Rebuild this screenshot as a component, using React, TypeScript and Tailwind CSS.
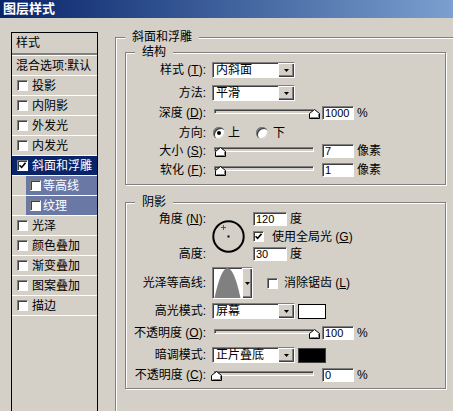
import React from 'react';

// Win2000-style bevels
const sunken =
  'border border-t-[#808080] border-l-[#808080] border-r-white border-b-white shadow-[inset_1px_1px_0_#404040]';
const raised =
  'bg-[#d4d0c8] shadow-[inset_1px_1px_0_#fff,inset_-1px_-1px_0_#404040,inset_-2px_-2px_0_#808080]';
const etched = 'border border-[#808080] shadow-[inset_1px_1px_0_#fff,1px_1px_0_#fff]';

function Arrow() {
  return (
    <svg width="5" height="3" viewBox="0 0 5 3">
      <polygon points="0,0 5,0 2.5,3" fill="#000" />
    </svg>
  );
}

function Check({ on = false }: { on?: boolean }) {
  return (
    <span className={`w-[11px] h-[11px] shrink-0 bg-white flex items-center justify-center ${sunken}`}>
      {on && (
        <svg width="7" height="7" viewBox="0 0 7 7">
          <path d="M0.5 3.2 L2.6 5.4 L6.5 0.8" fill="none" stroke="#000" strokeWidth="1.6" />
        </svg>
      )}
    </span>
  );
}

function Radio({ on = false }: { on?: boolean }) {
  return (
    <span className="w-[12px] h-[12px] shrink-0 rounded-full bg-white shadow-[inset_1px_1px_0_#808080,inset_2px_2px_0_#404040,inset_-1px_-1px_0_#d4d0c8] flex items-center justify-center">
      {on && <span className="w-[4px] h-[4px] rounded-full bg-black" />}
    </span>
  );
}

function Combo({ value }: { value: string }) {
  return (
    <div className={`flex w-[83px] h-[16px] shrink-0 bg-white ${sunken}`}>
      <span className="flex-1 pl-[3px] leading-[14px] whitespace-nowrap">{value}</span>
      <span className={`w-[16px] h-full flex items-center justify-center ${raised}`}>
        <Arrow />
      </span>
    </div>
  );
}

function Field({ v, w = 'w-[32px]' }: { v: string; w?: string }) {
  return (
    <span className={`h-[14px] ${w} shrink-0 bg-white pl-[2px] text-[11px] leading-[12px] flex items-center ${sunken}`}>
      {v}
    </span>
  );
}

function Thumb() {
  return (
    <svg width="11" height="10" viewBox="0 0 11 10">
      <path d="M0.5 9.5 V4.5 L5.5 0.5 L10.5 4.5 V9.5 Z" fill="#fff" stroke="#000" strokeWidth="1" />
      <path d="M9.5 5 V8.5 H1.5" fill="none" stroke="#808080" strokeWidth="1" />
    </svg>
  );
}

function Slider({ left }: { left: string }) {
  return (
    <div className="relative w-[100px] h-[14px] shrink-0 ml-[8px]">
      <div className={`mt-[3px] h-[5px] bg-[#d4d0c8] ${sunken}`} />
      <span className={`absolute top-[3px] ${left} flex`}>
        <Thumb />
      </span>
    </div>
  );
}

function Label({ children }: { children: React.ReactNode }) {
  return <span className="w-[80px] shrink-0 text-right whitespace-pre leading-[14px]">{children}</span>;
}

function Legend({ children }: { children: React.ReactNode }) {
  return (
    <div className="h-0 flex">
      <span className="ml-[9px] -mt-[8px] h-[14px] px-[7px] bg-[#d4d0c8] leading-[14px] whitespace-nowrap">
        {children}
      </span>
    </div>
  );
}

function Key({ k }: { k: string }) {
  return <span className="underline">{k}</span>;
}

function AngleDial() {
  return (
    <svg width="33" height="33" viewBox="0 0 33 33" className="ml-[6px] mt-[8px] shrink-0">
      <circle cx="16.5" cy="16.5" r="15.2" fill="none" stroke="#000" strokeWidth="2" />
      <rect x="15.5" y="15.5" width="2" height="2" fill="#000" />
      <path d="M9 7.5 H14 M11.5 5 V10" stroke="#555" strokeWidth="1" />
    </svg>
  );
}

function Contour() {
  return (
    <div className={`ml-[6px] flex w-[41px] h-[32px] shrink-0 bg-white ${sunken}`}>
      <svg width="29" height="30" viewBox="0 0 29 30" className="shrink-0">
        <path d="M1.5 30 Q14.5 -30 27.5 30 Z" fill="#808080" />
      </svg>
      <span className={`w-[10px] h-full flex items-center justify-center ${raised}`}>
        <Arrow />
      </span>
    </div>
  );
}

const effects = [
  { t: '投影' },
  { t: '内阴影' },
  { t: '外发光' },
  { t: '内发光' },
  { t: '斜面和浮雕', sel: true, on: true },
  { t: '等高线', sub: true },
  { t: '纹理', sub: true },
  { t: '光泽' },
  { t: '颜色叠加' },
  { t: '渐变叠加' },
  { t: '图案叠加' },
  { t: '描边' },
];

function StyleList() {
  return (
    <div className="w-[87px] h-[400px] shrink-0 border border-black">
      <div className="h-[20px] pl-[4px] flex items-center">样式</div>
      <div className="h-[3px] border-t-2 border-t-[#808080] border-b border-b-white" />
      <div className="h-[20px] pl-[4px] flex items-center whitespace-nowrap border-b border-white">
        混合选项:默认
      </div>
      {effects.map((it) => (
        <div key={it.t} className="h-[20px] flex border-b border-white">
          {it.sub ? (
            <div className="ml-[14px] flex-1 bg-[#6a78a6] text-white flex items-center pl-[4px]">
              <Check />
              <span className="ml-[2px] whitespace-nowrap">{it.t}</span>
            </div>
          ) : (
            <div className={`flex-1 flex items-center pl-[5px] ${it.sel ? 'bg-[#0a246a] text-white' : ''}`}>
              <Check on={it.on} />
              <span className="ml-[4px] whitespace-nowrap">{it.t}</span>
            </div>
          )}
        </div>
      ))}
    </div>
  );
}

export default function App() {
  return (
    <div className="w-[453px] h-[411px] overflow-hidden bg-[#d4d0c8] text-black text-[12px] font-['Liberation_Sans','Noto_Sans_CJK_SC',sans-serif]">
      <div className="h-[18px] w-[600px] bg-gradient-to-r from-[#0a246a] to-[#a6caf0] flex items-center pl-[3px] text-white font-bold text-[13px] leading-[16px]">
        图层样式
      </div>

      <div className="flex pt-[14px] pl-[11px]">
        <StyleList />

        {/* 斜面和浮雕 */}
        <div className={`ml-[17px] mt-[5px] w-[350px] h-[400px] shrink-0 flex flex-col ${etched}`}>
          <Legend>斜面和浮雕</Legend>

          {/* 结构 */}
          <div className={`ml-[9px] mt-[14px] w-[321px] h-[133px] shrink-0 flex flex-col ${etched}`}>
            <Legend>结构</Legend>
            <div className="mt-[9px] h-[16px] flex items-center">
              <Label>
                样式 (<Key k="T" />):
              </Label>
              <span className="ml-[6px]">
                <Combo value="内斜面" />
              </span>
            </div>
            <div className="mt-[7px] h-[16px] flex items-center">
              <Label>方法:</Label>
              <span className="ml-[6px]">
                <Combo value="平滑" />
              </span>
            </div>
            <div className="mt-[5px] h-[14px] flex items-center">
              <Label>
                深度 (<Key k="D" />):
              </Label>
              <Slider left="left-[95px]" />
              <span className="ml-[8px]">
                <Field v="1000" />
              </span>
              <span className="ml-[3px]">%</span>
            </div>
            <div className="mt-[6px] h-[14px] flex items-center">
              <Label>方向:</Label>
              <span className="ml-[7px]">
                <Radio on />
              </span>
              <span className="ml-[3px]">上</span>
              <span className="ml-[16px]">
                <Radio />
              </span>
              <span className="ml-[5px]">下</span>
            </div>
            <div className="mt-[4px] h-[14px] flex items-center">
              <Label>
                大小 (<Key k="S" />):
              </Label>
              <Slider left="left-[1px]" />
              <span className="ml-[8px]">
                <Field v="7" />
              </span>
              <span className="ml-[3px]">像素</span>
            </div>
            <div className="mt-[5px] h-[14px] flex items-center">
              <Label>
                软化 (<Key k="F" />):
              </Label>
              <Slider left="left-[1px]" />
              <span className="ml-[8px]">
                <Field v="1" />
              </span>
              <span className="ml-[3px]">像素</span>
            </div>
          </div>

          {/* 阴影 */}
          <div className={`ml-[9px] mt-[17px] w-[321px] h-[187px] shrink-0 flex flex-col ${etched}`}>
            <Legend>阴影</Legend>
            <div className="mt-[9px] flex">
              <div className="w-[80px] shrink-0 flex flex-col">
                <span className="h-[14px] flex items-center justify-end whitespace-pre">
                  角度 (<Key k="N" />):
                </span>
                <span className="mt-[21px] h-[14px] flex items-center justify-end">高度:</span>
              </div>
              <AngleDial />
              <div className="ml-[8px] flex flex-col">
                <div className="h-[14px] flex items-center">
                  <Field v="120" w="w-[34px]" />
                  <span className="ml-[3px]">度</span>
                </div>
                <div className="mt-[4px] h-[13px] flex items-center">
                  <Check on />
                  <span className="ml-[8px] whitespace-pre">
                    使用全局光 (<Key k="G" />)
                  </span>
                </div>
                <div className="mt-[4px] h-[14px] flex items-center">
                  <Field v="30" w="w-[34px]" />
                  <span className="ml-[3px]">度</span>
                </div>
              </div>
            </div>
            <div className="mt-[6px] h-[32px] flex items-center">
              <Label>光泽等高线:</Label>
              <Contour />
              <span className="ml-[14px]">
                <Check />
              </span>
              <span className="ml-[6px] whitespace-pre">
                消除锯齿 (<Key k="L" />)
              </span>
            </div>
            <div className="mt-[4px] h-[16px] flex items-center">
              <Label>高光模式:</Label>
              <span className="ml-[6px]">
                <Combo value="屏幕" />
              </span>
              <span className="ml-[3px] w-[28px] h-[15px] border border-black bg-white" />
            </div>
            <div className="mt-[7px] h-[14px] flex items-center">
              <Label>
                不透明度 (<Key k="O" />):
              </Label>
              <Slider left="left-[95px]" />
              <span className="ml-[8px]">
                <Field v="100" />
              </span>
              <span className="ml-[3px]">%</span>
            </div>
            <div className="mt-[7px] h-[16px] flex items-center">
              <Label>暗调模式:</Label>
              <span className="ml-[6px]">
                <Combo value="正片叠底" />
              </span>
              <span className="ml-[3px] w-[28px] h-[15px] border border-[#404040] bg-black" />
            </div>
            <div className="mt-[5px] h-[14px] flex items-center">
              <Label>
                不透明度 (<Key k="C" />):
              </Label>
              <Slider left="-left-[3px]" />
              <span className="ml-[8px]">
                <Field v="0" />
              </span>
              <span className="ml-[3px]">%</span>
            </div>
          </div>
        </div>
      </div>
    </div>
  );
}
